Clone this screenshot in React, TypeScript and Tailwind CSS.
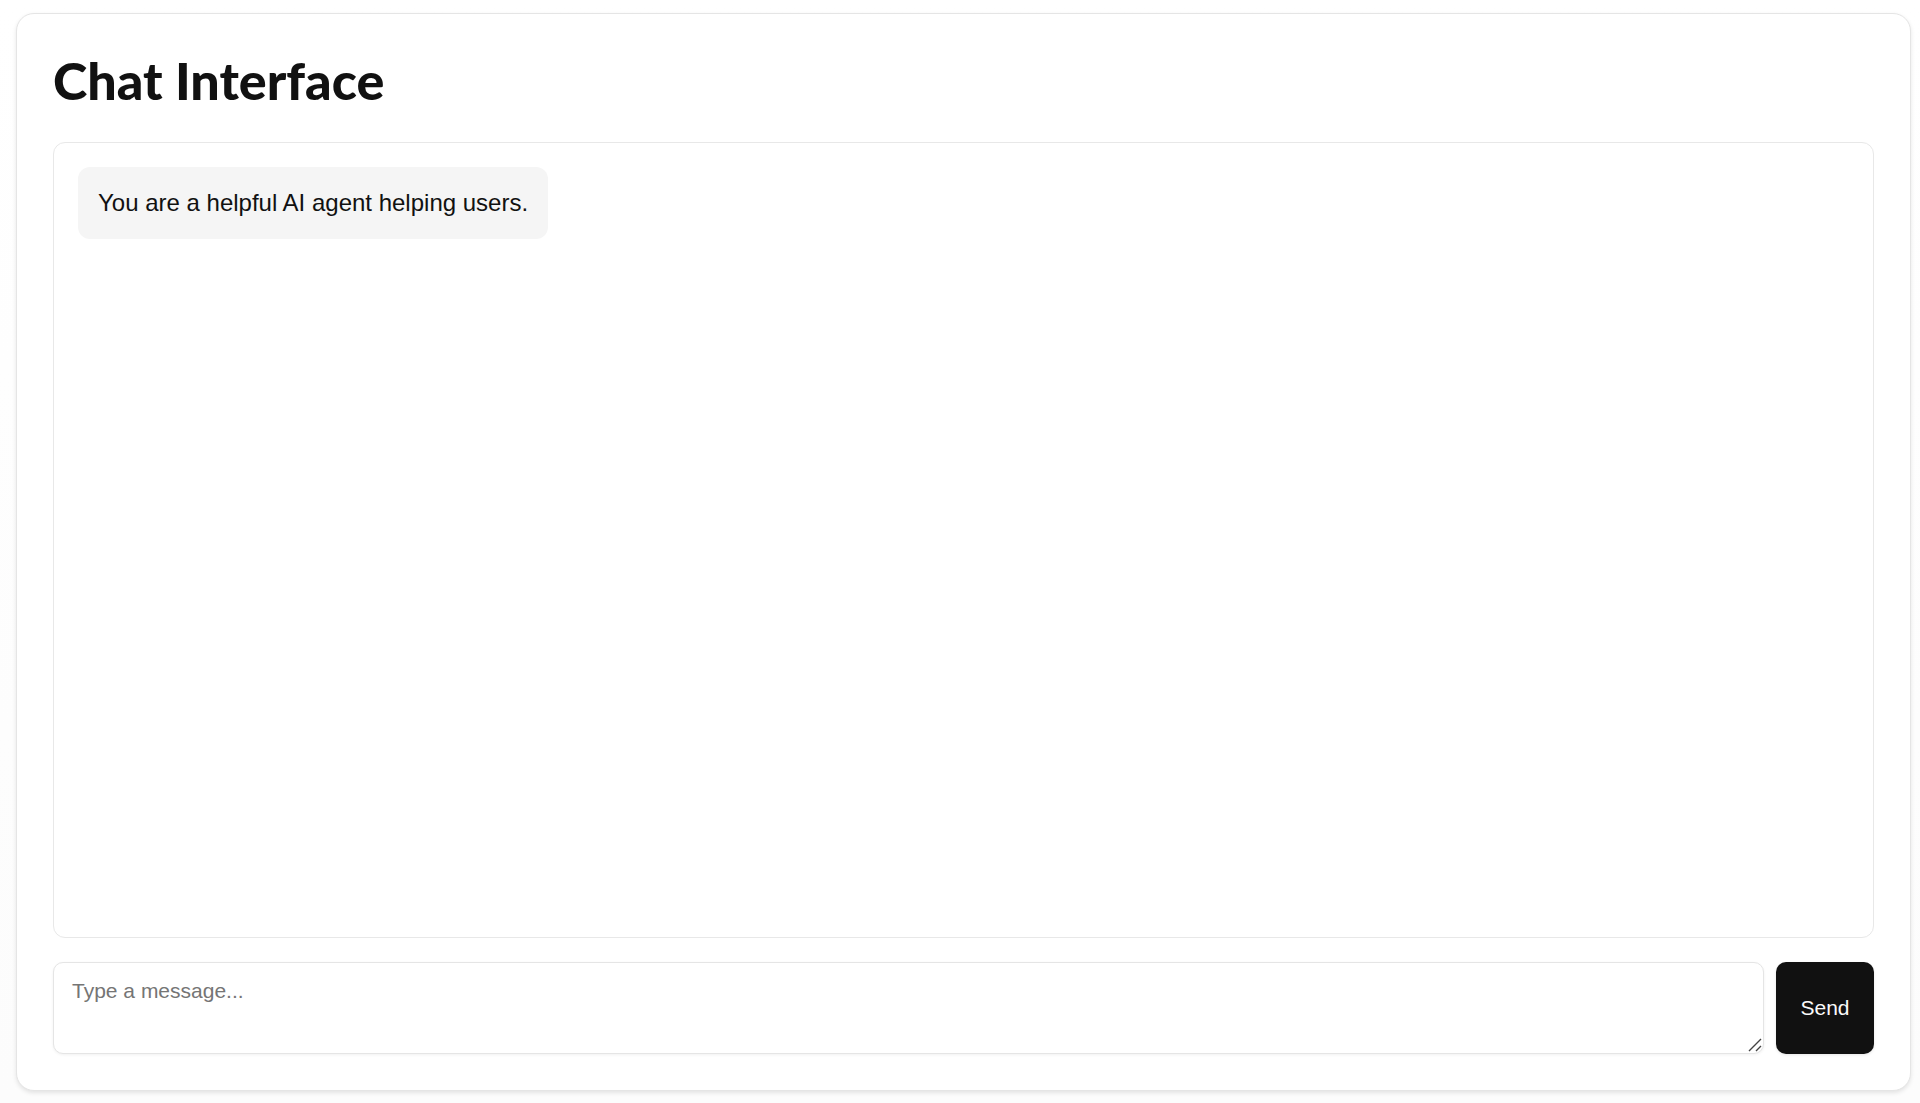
import { useState } from 'react';

interface Message {
  role: 'system' | 'user';
  content: string;
}

export default function App() {
  const [messages, setMessages] = useState<Message[]>([
    { role: 'system', content: 'You are a helpful AI agent helping users.' },
  ]);
  const [input, setInput] = useState('');

  const handleSend = (e: React.FormEvent) => {
    e.preventDefault();
    if (!input.trim()) return;

    setMessages((prev) => [...prev, { role: 'user', content: input }]);
    setInput('');
  };

  return (
    <div className="flex min-h-screen flex-col bg-linear-to-b from-white to-[#fcfcfc] pt-[13px] pr-[9px] pb-3 pl-4 font-['Liberation_Sans',Arial,sans-serif] text-[#111111]">
      <main className="flex flex-1 flex-col rounded-[18px] border border-[#e5e5e5] bg-white p-9 shadow-[0_2px_4px_rgba(0,0,0,0.1)]">
        {/* Header */}
        <h1 className="mb-8 font-['Lato',sans-serif] text-[52px] leading-[60px] font-black">
          Chat Interface
        </h1>

        {/* Messages */}
        <div className="mb-6 flex flex-1 flex-col gap-4 rounded-xl border border-[#e8e8e8] p-6">
          {messages.map((message, i) => (
            <div
              key={i}
              className={`max-w-[80%] rounded-xl px-5 py-[18px] text-2xl leading-9 ${
                message.role === 'user'
                  ? 'self-end bg-[#111111] text-white'
                  : 'self-start bg-[#f5f5f5]'
              }`}
            >
              {message.content}
            </div>
          ))}
        </div>

        {/* Input */}
        <form onSubmit={handleSend} className="flex gap-3">
          <div className="relative flex flex-1">
            <textarea
              aria-label="Message"
              value={input}
              onChange={(e) => setInput(e.target.value)}
              placeholder="Type a message..."
              className="h-[92px] w-full resize-none rounded-[10px] border border-[#e5e5e5] bg-white px-[18px] py-3 text-[21px] leading-8 shadow-[0_1px_3px_rgba(0,0,0,0.06)] placeholder:text-[#757575]"
            />
            <svg
              className="pointer-events-none absolute right-0.5 bottom-0.5 h-3.5 w-3.5"
              viewBox="0 0 14 14"
              stroke="#444444"
              strokeWidth="1.4"
              aria-hidden="true"
            >
              <path d="M1 13 13 1M8 13l5-5" />
            </svg>
          </div>
          <button
            type="submit"
            className="w-[98px] rounded-[10px] bg-[#111111] text-[21px] text-[#fafafa] shadow-[0_1px_3px_rgba(0,0,0,0.1)]"
          >
            Send
          </button>
        </form>
      </main>
    </div>
  );
}
